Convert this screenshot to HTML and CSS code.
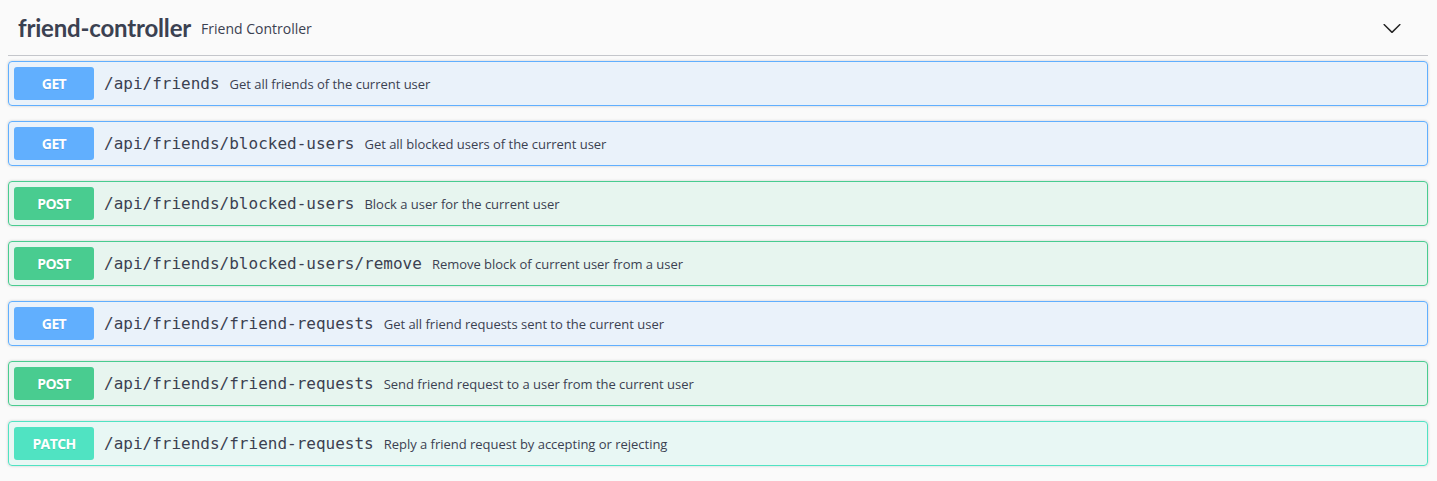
FILE: index.html
```html
<!DOCTYPE html>
<html>
<head>
<meta charset="utf-8">
<link rel="stylesheet" href="styles.css">
</head>
<body>
<div class="wrap">
  <div class="tag">
    <div class="tag-title">
      <span class="tag-name">friend-controller</span>
      <small class="tag-desc">Friend Controller</small>
    </div>
    <button class="expand" aria-label="collapse">
      <svg width="20" height="20" viewBox="0 0 20 20"><path d="M17.418 6.109c.272-.268.709-.268.979 0s.271.701 0 .969l-7.908 7.83c-.27.268-.707.268-.979 0l-7.908-7.83c-.27-.268-.27-.701 0-.969.271-.268.709-.268.979 0L10 13.25l7.418-7.141z" fill="#222"/></svg>
    </button>
  </div>

  <div class="op op-get"><span class="method">GET</span><span class="path">/api/friends</span><span class="desc">Get all friends of the current user</span></div>
  <div class="op op-get"><span class="method">GET</span><span class="path">/api/friends/blocked-users</span><span class="desc">Get all blocked users of the current user</span></div>
  <div class="op op-post"><span class="method">POST</span><span class="path">/api/friends/blocked-users</span><span class="desc">Block a user for the current user</span></div>
  <div class="op op-post"><span class="method">POST</span><span class="path">/api/friends/blocked-users/remove</span><span class="desc">Remove block of current user from a user</span></div>
  <div class="op op-get"><span class="method">GET</span><span class="path">/api/friends/friend-requests</span><span class="desc">Get all friend requests sent to the current user</span></div>
  <div class="op op-post"><span class="method">POST</span><span class="path">/api/friends/friend-requests</span><span class="desc">Send friend request to a user from the current user</span></div>
  <div class="op op-patch"><span class="method">PATCH</span><span class="path">/api/friends/friend-requests</span><span class="desc">Reply a friend request by accepting or rejecting</span></div>
</div>
</body>
</html>
```
FILE: styles.css
```css
html, body {
  margin: 0;
  padding: 0;
  background: #fafafa;
}
.wrap {
  padding: 0 9px 0 8px;
}
.tag {
  display: flex;
  align-items: center;
  justify-content: space-between;
  height: 35px;
  padding: 10px 20px 10px 10px;
  border-bottom: 1px solid #c4c6cb;
  margin-bottom: 5px;
}
.tag-title {
  display: flex;
  align-items: center;
}
.tag-name {
  font-family: Lato, "Open Sans", sans-serif;
  font-weight: 700;
  font-size: 24px;
  color: #3b4151;
  letter-spacing: -0.18px;
}
.tag-desc {
  font-family: "Open Sans", sans-serif;
  font-size: 14px;
  color: #3b4151;
  padding: 0 10px;
  margin-top: 2px;
}
.expand {
  border: none;
  background: none;
  padding: 0;
  margin: 0 6px 0 0;
  width: 20px;
  height: 20px;
  display: block;
}
.expand svg { display: block; }
.op {
  display: flex;
  align-items: center;
  padding: 5px;
  border: 1px solid;
  border-radius: 4px;
  box-shadow: 0 0 3px rgba(0,0,0,.19);
  margin-bottom: 15px;
}
.method {
  box-sizing: border-box;
  min-width: 80px;
  height: 33px;
  display: flex;
  align-items: center;
  justify-content: center;
  border-radius: 3px;
  font-family: "Open Sans", sans-serif;
  font-weight: 700;
  font-size: 14px;
  letter-spacing: -0.6px;
  color: #fff;
  text-shadow: 0 1px 0 rgba(0,0,0,.1);
}
.path {
  font-family: "DejaVu Sans Mono", monospace;
  font-size: 16px;
  color: #3b4151;
  padding: 0 10px;
}
.desc {
  font-family: "Open Sans", sans-serif;
  font-size: 13px;
  color: #3b4151;
  letter-spacing: -0.02px;
}
.op-get { background: rgba(97,175,254,.1); border-color: #61affe; }
.op-get .method { background: #61affe; }
.op-post { background: rgba(73,204,144,.1); border-color: #49cc90; }
.op-post .method { background: #49cc90; }
.op-patch { background: rgba(80,227,194,.1); border-color: #50e3c2; }
.op-patch .method { background: #50e3c2; }
```
